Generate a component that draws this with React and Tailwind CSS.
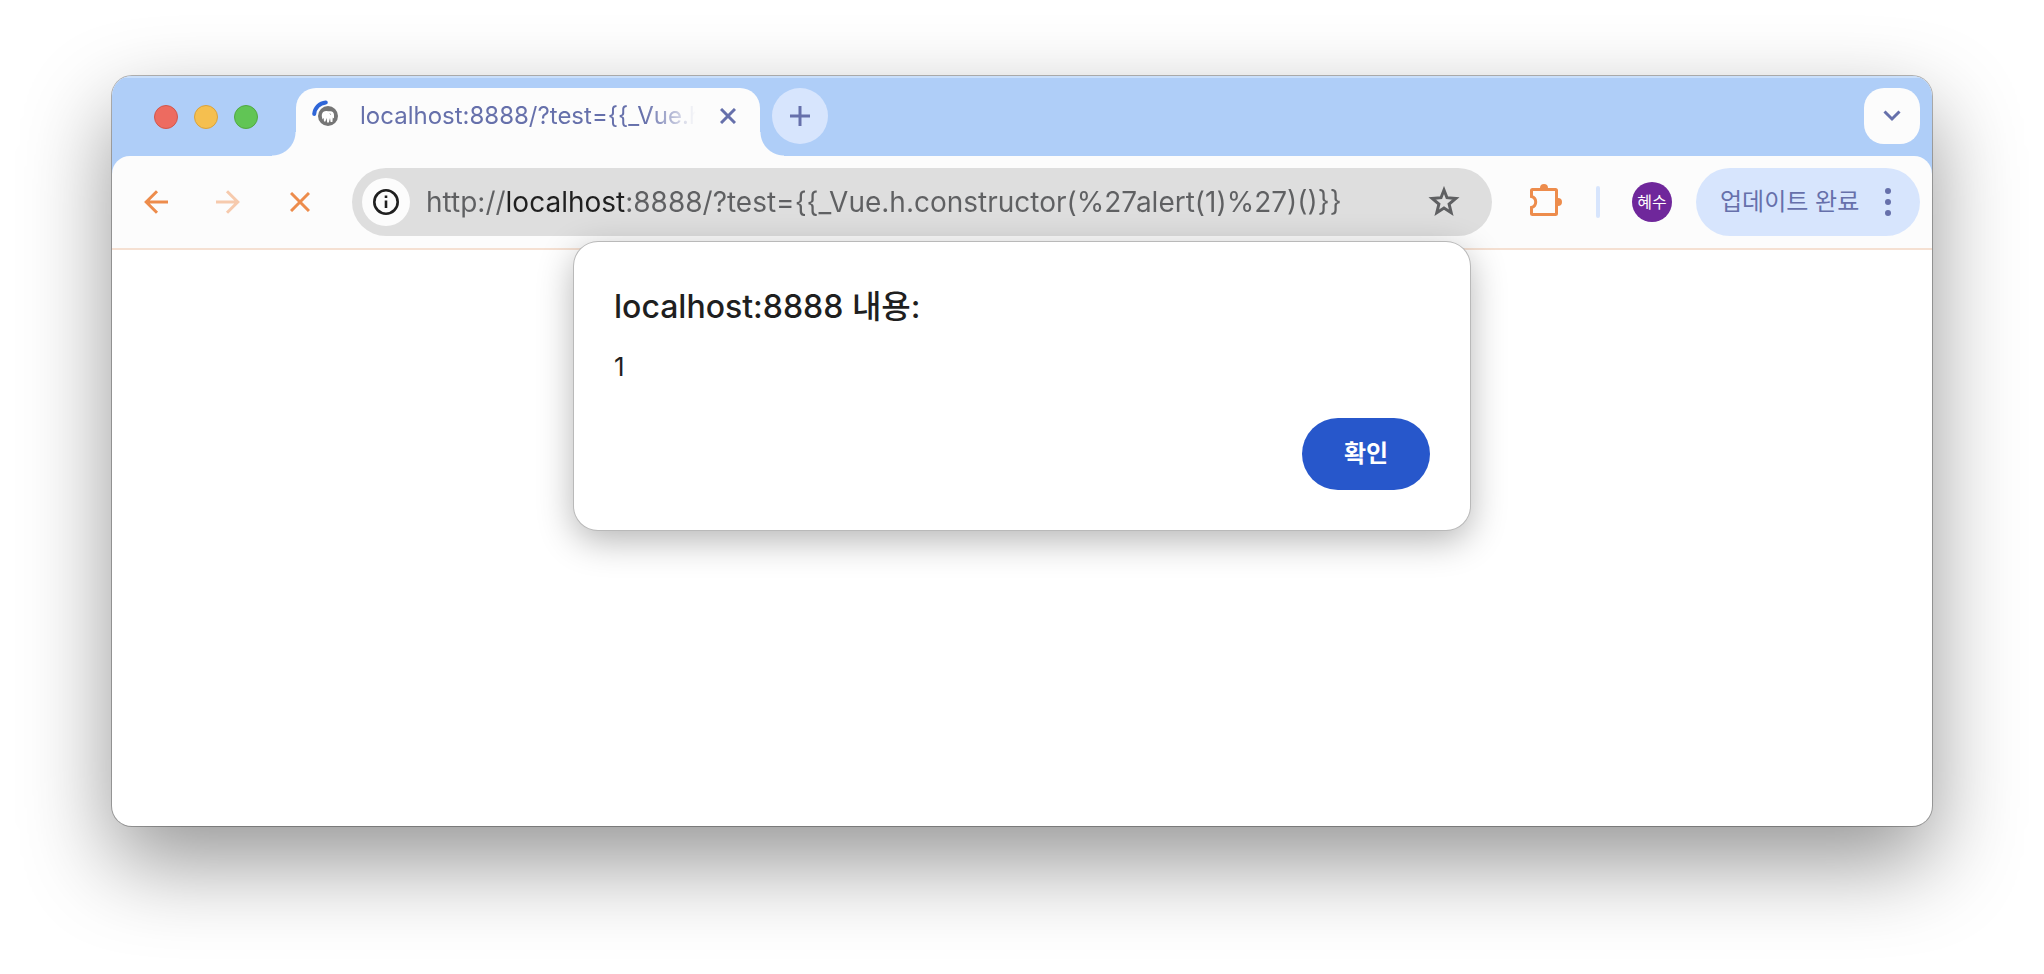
const FONT = 'font-[Inter,"Noto_Sans_CJK_KR",sans-serif]';

function LoadingFavicon() {
  return (
    <svg viewBox="0 0 32 32" className="size-8 shrink-0" fill="none" aria-hidden="true">
      <path d="M4.200 14C4.800 7.800 9.400 3 15.800 2.400" stroke="#2f66d8" strokeWidth="4" strokeLinecap="round" />
      <circle cx="18" cy="16" r="10" fill="#757575" />
      <path
        d="M12 17.500C11.200 13.600 13 11.200 16 11C17.600 10.800 18.600 11.400 19.800 11.200C22.200 10.800 24 12.400 24 14.800V18.400L22.800 17.600L22.400 22H20.600L20 18L18.800 22.400H17.200L16.600 18L15.400 21.400H14L13.600 17.800L12.600 19.600Z"
        fill="#fff"
      />
      <path d="M19.800 13.200L20.800 15" stroke="#b5b5b5" />
    </svg>
  );
}

function BackArrow({ className }) {
  return (
    <svg viewBox="0 0 24 24" className={className} fill="none" stroke="currentColor" strokeWidth="3" aria-hidden="true">
      <path d="M24 12H2.500M13 1.200L2.200 12L13 22.800" />
    </svg>
  );
}

function TabStrip() {
  return (
    <div className="flex h-20 bg-[#afcef8] shadow-[inset_0_2px_0_#c9dffb]">
      <div className="flex w-46 shrink-0 items-center gap-4 pl-[42px] pt-[2px]">
        <button aria-label="닫기" className="size-6 rounded-full border border-[#d1574c] bg-[#ed6b60]" />
        <button aria-label="최소화" className="size-6 rounded-full border border-[#d9a23c] bg-[#f5bf4f]" />
        <button aria-label="확대" className="size-6 rounded-full border border-[#52a842] bg-[#61c555]" />
      </div>

      <div className="relative mt-3 flex w-[464px] shrink-0 items-center rounded-t-[20px] bg-[#fcfcfc] pr-5 pl-[14px] pb-3">
        {/* flared bottom corners of the tab */}
        <span className="absolute bottom-0 -left-6 size-6 bg-[radial-gradient(circle_at_0_0,transparent_23px,#fcfcfc_24px)]" />
        <span className="absolute bottom-0 -right-6 size-6 bg-[radial-gradient(circle_at_100%_0,transparent_23px,#fcfcfc_24px)]" />
        <LoadingFavicon />
        <span className="ml-[18px] mask-[linear-gradient(90deg,#000_285px,transparent_336px)] text-2xl whitespace-nowrap text-[#6670ab]">
          localhost:8888/?test={'{{'}_Vue.h
        </span>
        <button aria-label="탭 닫기" className="ml-auto flex w-6 justify-center text-[#6670ab]">
          <svg viewBox="0 0 16 16" className="size-4" fill="none" stroke="currentColor" strokeWidth="3" aria-hidden="true">
            <path d="M1 1L15 15M15 1L1 15" />
          </svg>
        </button>
      </div>

      <button aria-label="새 탭" className="mt-3 ml-3 flex size-14 items-center justify-center rounded-full bg-[#d7e5fd] text-[#6670ab]">
        <svg viewBox="0 0 20 20" className="size-5" fill="none" stroke="currentColor" strokeWidth="3" aria-hidden="true">
          <path d="M10 0V20M0 10H20" />
        </svg>
      </button>

      <button aria-label="탭 검색" className="mt-3 mr-3 ml-auto flex size-14 items-center justify-center rounded-[20px] bg-[#fcfcfc] text-[#6670ab]">
        <svg viewBox="0 0 18 12" className="h-3 w-[18px]" fill="none" stroke="currentColor" strokeWidth="3" aria-hidden="true">
          <path d="M1.500 1.500L9 9L16.500 1.500" />
        </svg>
      </button>
    </div>
  );
}

function Toolbar() {
  return (
    <div className="bg-[#afcef8]">
      <div className="flex h-[94px] items-center rounded-t-[18px] border-b-2 border-[#f5e0d2] bg-[#fcfcfc] pr-3 pl-8">
        <div className="flex w-[208px] shrink-0 items-center gap-12 text-[#ed8c4c]">
          <button aria-label="뒤로">
            <BackArrow className="size-6" />
          </button>
          <button aria-label="앞으로" disabled className="text-[#f6caad]">
            <BackArrow className="size-6 rotate-180" />
          </button>
          <button aria-label="로드 중지" className="flex size-6 items-center justify-center">
            <svg viewBox="0 0 20 20" className="size-5" fill="none" stroke="currentColor" strokeWidth="3" aria-hidden="true">
              <path d="M1 1L19 19M19 1L1 19" />
            </svg>
          </button>
        </div>

        <div className="flex h-17 flex-1 items-center rounded-full bg-[#dedede] pr-8 pl-[10px]">
          <button aria-label="사이트 정보 보기" className="flex size-12 shrink-0 items-center justify-center rounded-full bg-[#fcfcfc] text-[#1f1f1f]">
            <svg viewBox="0 0 26 26" className="size-[26px]" fill="none" aria-hidden="true">
              <circle cx="13" cy="13" r="11.700" stroke="currentColor" strokeWidth="2.600" />
              <path d="M13 11.500V19M13 6.500V9" stroke="currentColor" strokeWidth="2.600" />
            </svg>
          </button>
          <input
            aria-label="주소창"
            defaultValue="http://localhost:8888/?test={{_Vue.h.constructor(%27alert(1)%27)()}}"
            spellCheck={false}
            className="ml-4 min-w-0 flex-1 bg-[linear-gradient(90deg,#5f6062_79px,#1f1f1f_79px,#1f1f1f_199px,#5f6062_199px)] bg-clip-text text-[28px] text-transparent caret-[#1f1f1f] outline-none"
          />
          <button aria-label="북마크에 추가" className="shrink-0 text-[#5f6062]">
            <svg viewBox="0 0 32 32" className="size-8" fill="none" stroke="currentColor" strokeWidth="3" aria-hidden="true">
              <path d="M16 4L19 11.700L27.800 12.400L21.100 18.100L23.200 26.700L16 22.100L8.800 26.700L10.900 18.100L4.200 12.400L13 11.700Z" />
            </svg>
          </button>
        </div>

        <button aria-label="확장 프로그램" className="ml-[38px] shrink-0 text-[#ed8c4c]">
          <svg viewBox="0 0 32 36" className="h-9 w-8" fill="none" aria-hidden="true">
            <path
              d="M2.500 5.500H25.500Q26.500 5.500 26.500 6.500V29.500Q26.500 30.500 25.500 30.500H2.500Q1.500 30.500 1.500 29.500V23.500A5.700 5.700 0 0 0 1.500 12.500V6.500Q1.500 5.500 2.500 5.500Z"
              stroke="currentColor"
              strokeWidth="3"
            />
            <path d="M10 4A4 4 0 0 1 18 4ZM28 14A4 4 0 0 1 28 22Z" fill="currentColor" />
          </svg>
        </button>
        <div className="ml-[34px] h-8 w-1 shrink-0 rounded-full bg-[#d7e5fd]" />
        <button className="ml-8 size-10 shrink-0 rounded-full bg-[#6f279b] text-base whitespace-nowrap text-white">혜수</button>
        <button className="ml-6 flex h-17 w-56 shrink-0 items-center justify-between rounded-full bg-[#d7e5fd] pr-[29px] pl-6 text-2xl whitespace-nowrap text-[#6670ab]">
          업데이트 완료
          <svg viewBox="0 0 6 28" className="h-7 w-[6px]" fill="currentColor" aria-hidden="true">
            <circle cx="3" cy="3" r="3" />
            <circle cx="3" cy="14" r="3" />
            <circle cx="3" cy="25" r="3" />
          </svg>
        </button>
      </div>
    </div>
  );
}

function AlertDialog() {
  return (
    <div
      role="alertdialog"
      aria-labelledby="alert-title"
      aria-describedby="alert-message"
      className="absolute top-[166px] left-1/2 flex w-[896px] max-w-full -translate-x-1/2 flex-col rounded-3xl bg-white px-10 pt-[45px] pb-10 text-[#1f1f1f] shadow-[0_0_0_1px_#b9b9b9,0_10px_36px_rgba(0,0,0,0.3)]"
    >
      <h1 id="alert-title" className="text-[32px] leading-10 font-medium">localhost:8888 내용:</h1>
      <p id="alert-message" className="mt-5 text-[26px] leading-10">1</p>
      <button className="mt-[31px] h-18 w-32 self-end rounded-full bg-[#2757cb] text-2xl font-bold text-white">확인</button>
    </div>
  );
}

export default function App() {
  return (
    <div className={`${FONT} min-h-screen overflow-hidden bg-white px-28 pt-[76px] pb-[148px]`}>
      <div className="relative flex min-h-[750px] flex-col rounded-[20px] bg-white shadow-[0_0_0_1px_rgba(0,0,0,0.28),0_36px_88px_rgba(0,0,0,0.42)]">
        <div className="overflow-hidden rounded-t-[20px]">
          <TabStrip />
          <Toolbar />
        </div>
        <AlertDialog />
      </div>
    </div>
  );
}
